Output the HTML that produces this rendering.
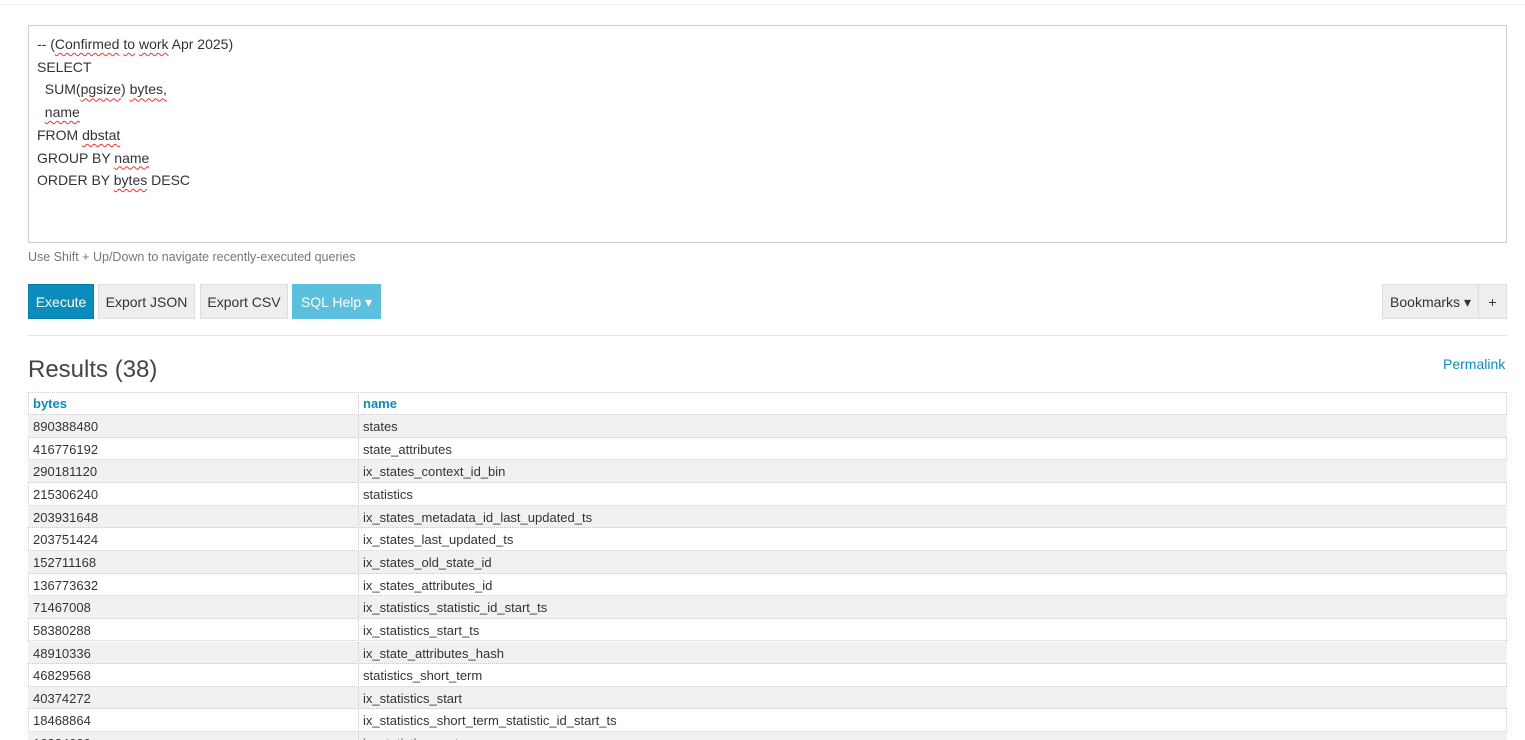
<!DOCTYPE html>
<html><head><meta charset="utf-8">
<style>
*{box-sizing:border-box;margin:0;padding:0}
html,body{width:1525px;height:740px;overflow:hidden}
body{background:#fff;font-family:"Liberation Sans",sans-serif;font-size:13px;color:#333;position:relative}
.a{position:absolute}
.ta{left:28px;top:25px;width:1479px;height:218px;border:1px solid #ccc;padding:7px 8px;font-size:14px;line-height:22.7px;color:#333;white-space:pre}
.sq{text-decoration:underline wavy #e33;text-decoration-thickness:1px;text-underline-offset:3px}
.btn{position:absolute;top:284px;height:35px;line-height:35px;text-align:center;font-size:14px;border:1px solid #ddd;background:#eee;color:#333}
.row{position:absolute;left:28px;width:1479px;height:22.65px;line-height:24px;border-bottom:1px dotted #ccc}
.row span{position:absolute;top:0}
.c1{left:5px}.c2{left:335px}
.row:after{content:"";position:absolute;left:330px;top:0;bottom:-1px;border-left:1px dotted #ccc}
.sh{background:#f1f1f1}
</style></head><body>
<div class="a" style="left:0;top:4px;width:1525px;border-top:1px solid #f0f0f0"></div>
<div class="a ta">-- (<span class="sq">Confirmed</span> <span class="sq">to</span> <span class="sq">work</span> Apr 2025)
SELECT
  SUM(<span class="sq">pgsize</span>) <span class="sq">bytes,</span>
  <span class="sq">name</span>
FROM <span class="sq">dbstat</span>
GROUP BY <span class="sq">name</span>
ORDER BY <span class="sq">bytes</span> DESC</div>
<div class="a" style="left:28px;top:250px;color:#777;font-size:12.5px">Use Shift + Up/Down to navigate recently-executed queries</div>
<div class="btn" style="left:28px;width:66px;background:#0a8cbd;border-color:#0a7aa8;color:#fff">Execute</div>
<div class="btn" style="left:98px;width:97px">Export JSON</div>
<div class="btn" style="left:200px;width:88px">Export CSV</div>
<div class="btn" style="left:292px;width:89px;background:#5bc0de;border-color:#5bc0de;color:#fff">SQL Help ▾</div>
<div class="btn" style="left:1382px;width:97px">Bookmarks ▾</div>
<div class="btn" style="left:1478px;width:29px">+</div>
<div class="a" style="left:28px;top:335px;width:1479px;border-top:1px solid #e5e5e5"></div>
<div class="a" style="left:28px;top:356px;font-size:24px;color:#444">Results (38)</div>
<div class="a" style="left:1443px;top:356px;font-size:14px;color:#0a8cbd">Permalink</div>
<div class="a" style="left:28px;top:392px;width:1479px;height:350px;border:1px dotted #ccc;border-bottom:none"></div>
<div class="row" style="top:392px;height:23px;font-weight:bold;color:#0a8cbd"><span class="c1">bytes</span><span class="c2">name</span></div>
<div class="row sh" style="top:415px"><span class="c1">890388480</span><span class="c2">states</span></div>
<div class="row" style="top:437.65px"><span class="c1">416776192</span><span class="c2">state_attributes</span></div>
<div class="row sh" style="top:460.3px"><span class="c1">290181120</span><span class="c2">ix_states_context_id_bin</span></div>
<div class="row" style="top:482.95px"><span class="c1">215306240</span><span class="c2">statistics</span></div>
<div class="row sh" style="top:505.6px"><span class="c1">203931648</span><span class="c2">ix_states_metadata_id_last_updated_ts</span></div>
<div class="row" style="top:528.25px"><span class="c1">203751424</span><span class="c2">ix_states_last_updated_ts</span></div>
<div class="row sh" style="top:550.9px"><span class="c1">152711168</span><span class="c2">ix_states_old_state_id</span></div>
<div class="row" style="top:573.55px"><span class="c1">136773632</span><span class="c2">ix_states_attributes_id</span></div>
<div class="row sh" style="top:596.2px"><span class="c1">71467008</span><span class="c2">ix_statistics_statistic_id_start_ts</span></div>
<div class="row" style="top:618.85px"><span class="c1">58380288</span><span class="c2">ix_statistics_start_ts</span></div>
<div class="row sh" style="top:641.5px"><span class="c1">48910336</span><span class="c2">ix_state_attributes_hash</span></div>
<div class="row" style="top:664.15px"><span class="c1">46829568</span><span class="c2">statistics_short_term</span></div>
<div class="row sh" style="top:686.8px"><span class="c1">40374272</span><span class="c2">ix_statistics_start</span></div>
<div class="row" style="top:709.45px"><span class="c1">18468864</span><span class="c2">ix_statistics_short_term_statistic_id_start_ts</span></div>
<div class="row sh" style="top:732.1px"><span class="c1">16384000</span><span class="c2">ix_statistics_meta</span></div>
</body></html>
